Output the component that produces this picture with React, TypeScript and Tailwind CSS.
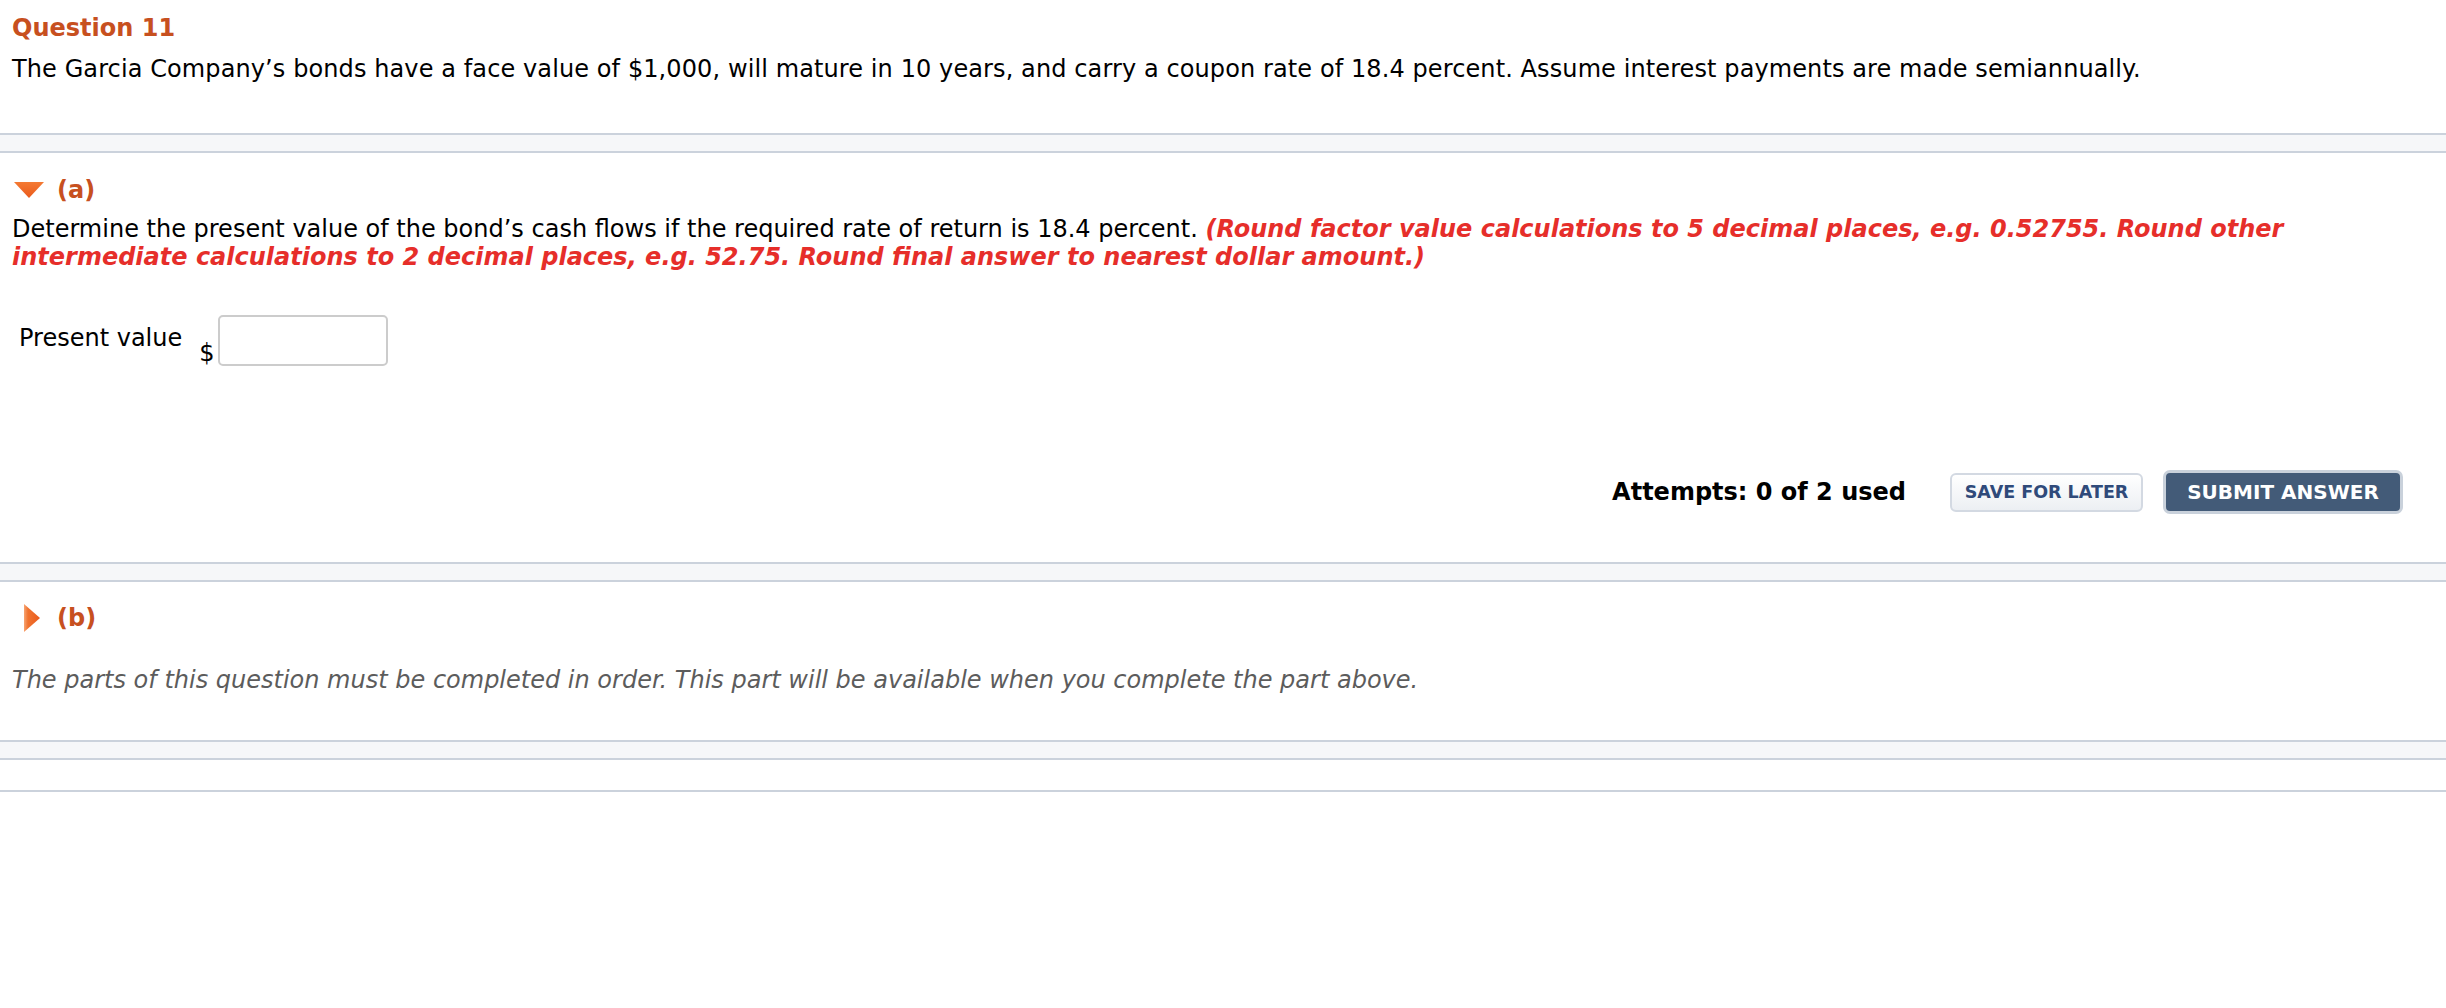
import React from "react";

const font = { fontFamily: '"DejaVu Sans", Verdana, sans-serif' };

function Separator() {
  return <div className="h-[20px] border-y-2 border-[#cbd2dc] bg-[#f6f7f9]" />;
}

function DownArrow() {
  return (
    <svg width="30" height="16" viewBox="0 0 30 16" className="shrink-0">
      <defs>
        <linearGradient id="down" x1="0" y1="0" x2="0" y2="1">
          <stop offset="0" stopColor="#f47a33" />
          <stop offset="1" stopColor="#ea5a1c" />
        </linearGradient>
      </defs>
      <polygon points="0,0 30,0 15,16" fill="url(#down)" />
    </svg>
  );
}

function RightArrow() {
  return (
    <svg width="16" height="28" viewBox="0 0 16 28" className="shrink-0">
      <defs>
        <linearGradient id="right" x1="0" y1="0" x2="1" y2="0">
          <stop offset="0" stopColor="#f7a472" />
          <stop offset="0.25" stopColor="#f07330" />
          <stop offset="1" stopColor="#ea5a1c" />
        </linearGradient>
      </defs>
      <polygon points="0,0 16,14 0,28" fill="url(#right)" />
    </svg>
  );
}

export default function App() {
  return (
    <div className="min-h-screen w-full bg-white text-black" style={font}>
      {/* question stem */}
      <div className="px-[12px] pt-[14px] pb-[50px]">
        <h2 className="text-[24px] leading-[28px] font-bold text-[#c7501f]">Question 11</h2>
        <p className="mt-[13px] text-[24px] leading-[28px] tracking-[0.1px]">
          The Garcia Company’s bonds have a face value of $1,000, will mature in 10 years, and carry a coupon rate of
          18.4 percent. Assume interest payments are made semiannually.
        </p>
      </div>

      <Separator />

      {/* part a */}
      <div className="pt-[23px] pb-[48px]">
        <div className="flex h-[28px] items-center pl-[14px]">
          <DownArrow />
          <span className="ml-[13px] text-[24px] leading-[28px] font-bold text-[#c7501f]">(a)</span>
        </div>
        <p className="mt-[11px] px-[12px] text-[24px] leading-[28px]">
          Determine the present value of the bond’s cash flows if the required rate of return is 18.4 percent.{" "}
          <span className="font-bold italic text-[#e62e2a]">
            (Round factor value calculations to 5 decimal places, e.g. 0.52755. Round other
            <br />
            intermediate calculations to 2 decimal places, e.g. 52.75. Round final answer to nearest dollar amount.)
          </span>
        </p>

        <div className="mt-[44px] flex items-start pl-[19px]">
          <span className="mt-[9px] text-[24px] leading-[28px]">Present value</span>
          <span className="mt-[24px] ml-[17px] text-[24px] leading-[28px]">$</span>
          <input
            type="text"
            className="ml-[3px] h-[51px] w-[170px] rounded-[5px] border-2 border-[#cccccc] bg-white outline-none"
          />
        </div>

        <div className="mt-[103px] flex items-center justify-end pr-[43px]">
          <span className="text-[24px] font-bold">Attempts: 0 of 2 used</span>
          <button className="ml-[44px] h-[39px] w-[193px] rounded-[6px] border-2 border-[#d3d9e2] bg-gradient-to-b from-white to-[#eceff3] text-[17.5px] font-bold text-[#2f4a7a]">
            SAVE FOR LATER
          </button>
          <button className="ml-[20px] h-[44px] w-[240px] rounded-[7px] border-[3px] border-[#c9d1db] bg-[#435b78] text-[20px] font-bold text-white">
            SUBMIT ANSWER
          </button>
        </div>
      </div>

      <Separator />

      {/* part b */}
      <div className="pt-[22px] pb-[46px]">
        <div className="flex h-[28px] items-center pl-[24px]">
          <RightArrow />
          <span className="ml-[17px] text-[24px] leading-[28px] font-bold text-[#c7501f]">(b)</span>
        </div>
        <p className="mt-[34px] px-[12px] text-[24px] leading-[28px] italic text-[#5c5c5c]">
          The parts of this question must be completed in order. This part will be available when you complete the part
          above.
        </p>
      </div>

      <Separator />
      <div className="h-[32px] border-b-2 border-[#cbd2dc]" />
    </div>
  );
}
